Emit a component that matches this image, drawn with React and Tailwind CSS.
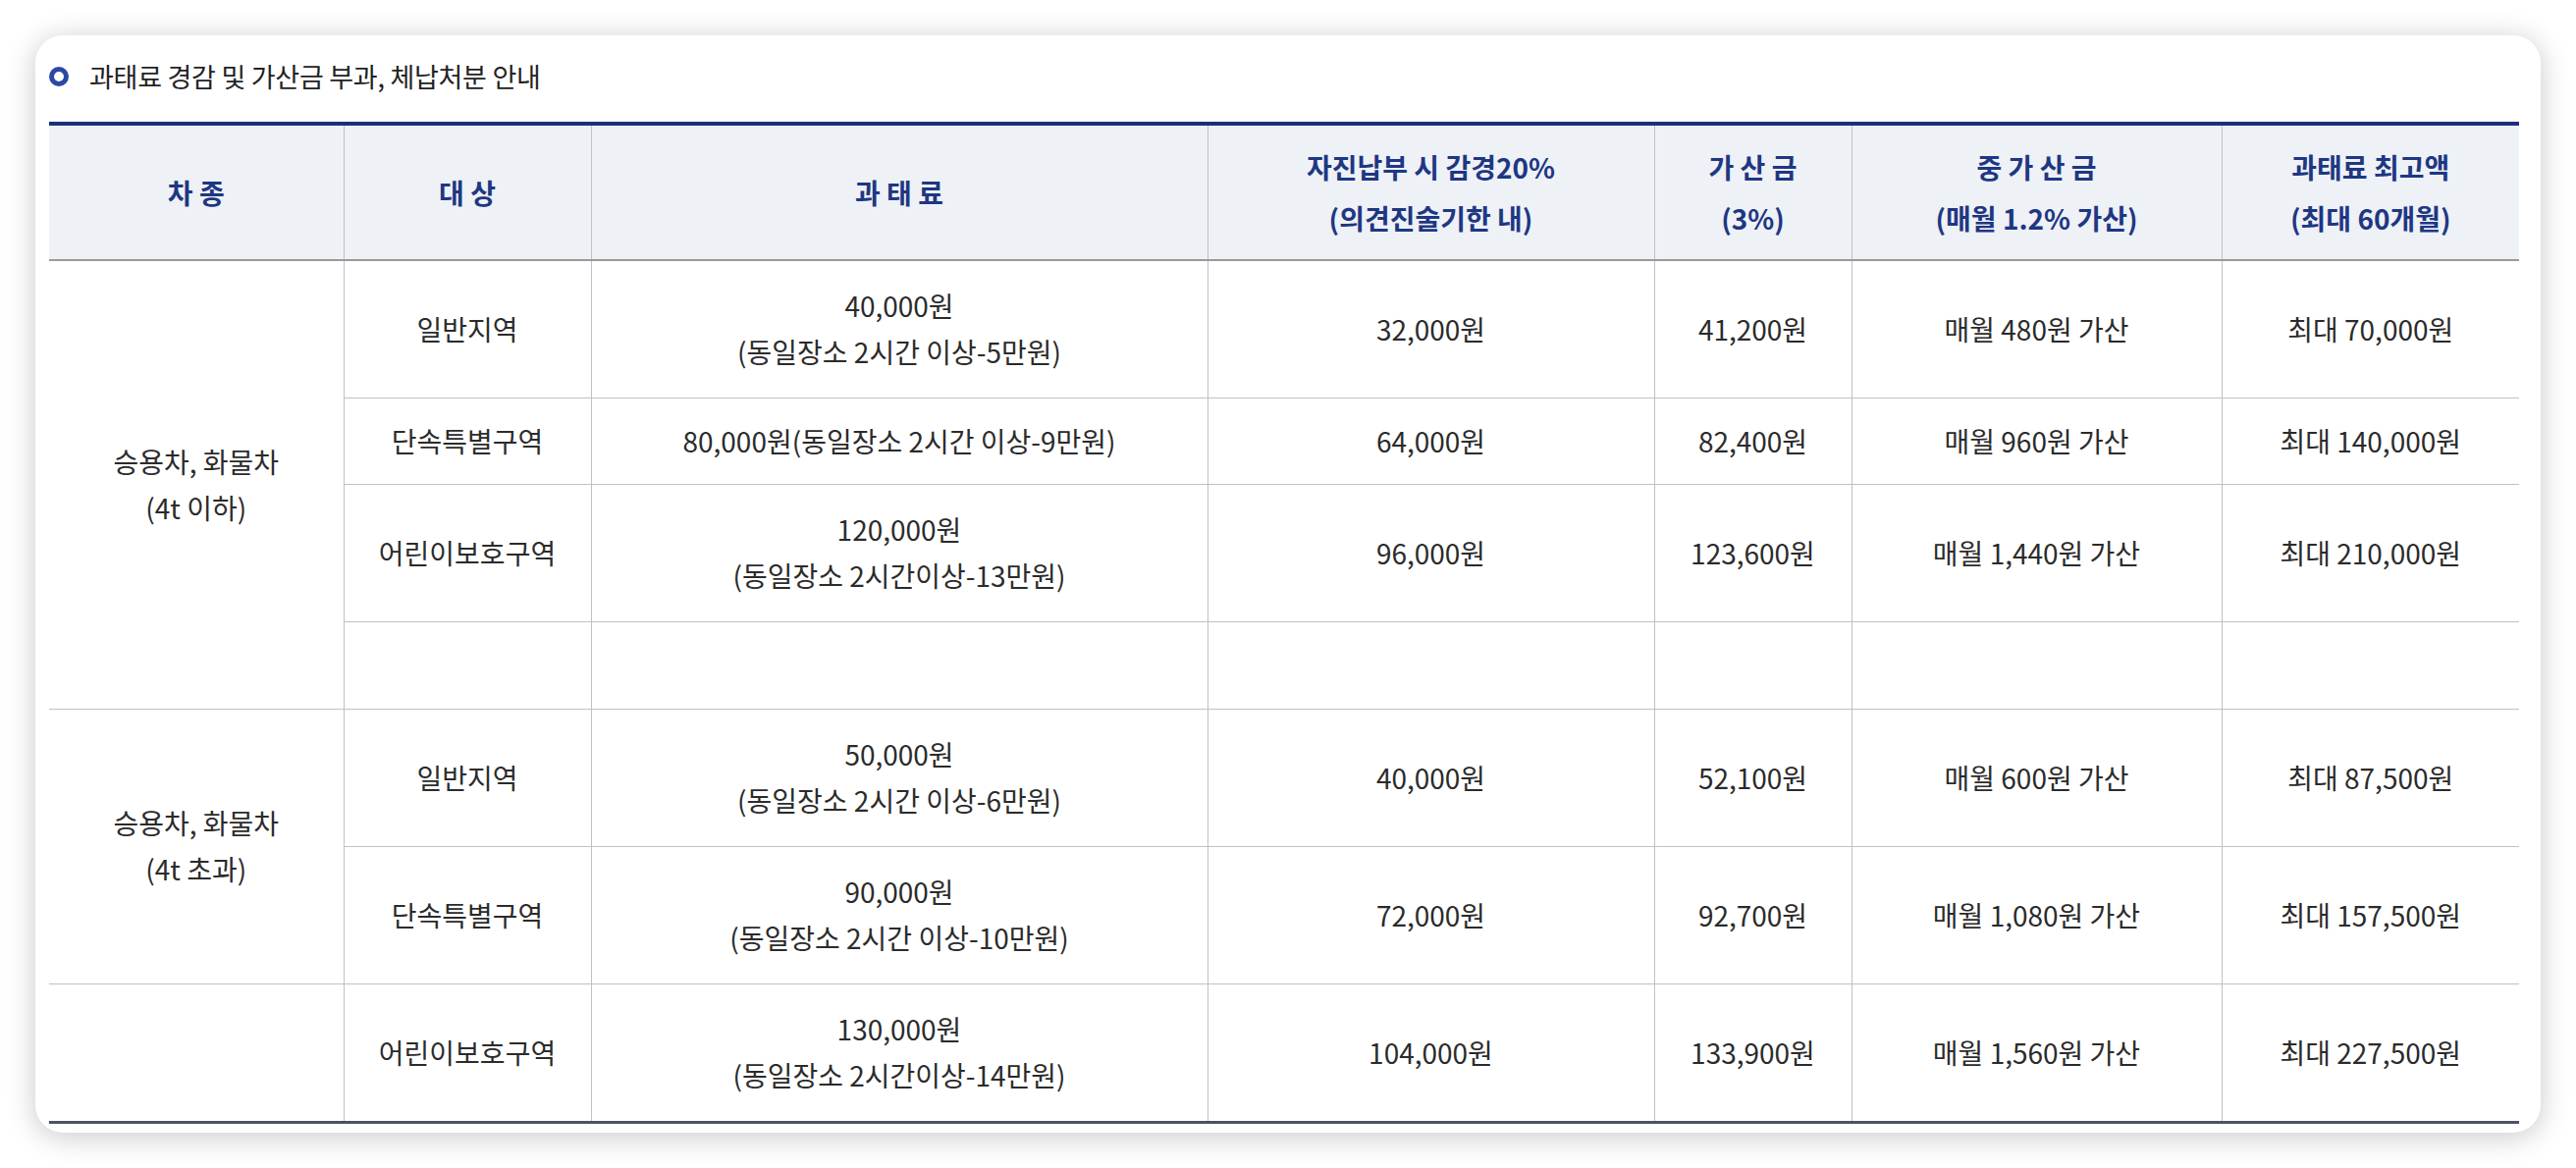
import React from "react";

const line = "border-[#bfc1c7]";

function Th({ children, last }) {
  return (
    <th
      className={`p-0 align-middle text-center font-bold text-[28px] leading-[52px] text-[#1e3783] border-b-2 border-b-[#9a9a9a] ${last ? "" : `border-r ${line}`}`}
    >
      {children}
    </th>
  );
}

function Td({ children, last, rowSpan }) {
  return (
    <td
      rowSpan={rowSpan}
      className={`p-0 align-middle text-center text-[28px] leading-[47px] text-[#2b2b2b] border-b ${line} ${last ? "" : `border-r ${line}`}`}
    >
      {children}
    </td>
  );
}

const rows = [
  { h: "h-[140px]", cells: ["일반지역", <>40,000원<br />(동일장소 2시간 이상-5만원)</>, "32,000원", "41,200원", "매월 480원 가산", "최대 70,000원"] },
  { h: "h-[88px]", cells: ["단속특별구역", "80,000원(동일장소 2시간 이상-9만원)", "64,000원", "82,400원", "매월 960원 가산", "최대 140,000원"] },
  { h: "h-[140px]", cells: ["어린이보호구역", <>120,000원<br />(동일장소 2시간이상-13만원)</>, "96,000원", "123,600원", "매월 1,440원 가산", "최대 210,000원"] },
  { h: "h-[89px]", cells: ["", "", "", "", "", ""] },
  { h: "h-[140px]", cells: ["일반지역", <>50,000원<br />(동일장소 2시간 이상-6만원)</>, "40,000원", "52,100원", "매월 600원 가산", "최대 87,500원"] },
  { h: "h-[140px]", cells: ["단속특별구역", <>90,000원<br />(동일장소 2시간 이상-10만원)</>, "72,000원", "92,700원", "매월 1,080원 가산", "최대 157,500원"] },
  { h: "h-[141px]", cells: ["어린이보호구역", <>130,000원<br />(동일장소 2시간이상-14만원)</>, "104,000원", "133,900원", "매월 1,560원 가산", "최대 227,500원"] },
];

export default function App() {
  return (
    <div className="w-[2624px] h-[1190px] bg-white pt-[36px] pl-[36px] font-['Noto_Sans_CJK_KR','Noto_Sans',sans-serif]">
      <div className="w-[2552px] h-[1118px] bg-white rounded-[28px] shadow-[0_4px_30px_rgba(0,0,0,0.22)] pt-[22px] pl-[14px] pr-[22px]">
        <div className="h-[40px] flex items-center">
          <span className="w-[20px] h-[20px] rounded-full border-[5px] border-[#2c47a5] box-border"></span>
          <span className="ml-[21px] text-[27px] leading-[40px] text-[#222] tracking-[-0.01em]">
            과태료 경감 및 가산금 부과, 체납처분 안내
          </span>
        </div>
        <table className="mt-[26px] w-[2516px] table-fixed border-collapse border-t-4 border-t-[#1b2f7e] border-b-[3px] border-b-[#4b5262]">
          <colgroup>
            <col className="w-[300px]" />
            <col className="w-[252px]" />
            <col className="w-[628px]" />
            <col className="w-[455px]" />
            <col className="w-[201px]" />
            <col className="w-[377px]" />
            <col className="w-[303px]" />
          </colgroup>
          <thead>
            <tr className="h-[139px] bg-[#eef1f6]">
              <Th>차 종</Th>
              <Th>대 상</Th>
              <Th>과 태 료</Th>
              <Th>자진납부 시 감경20%<br />(의견진술기한 내)</Th>
              <Th>가 산 금<br />(3%)</Th>
              <Th>중 가 산 금<br />(매월 1.2% 가산)</Th>
              <Th last>과태료 최고액<br />(최대 60개월)</Th>
            </tr>
          </thead>
          <tbody>
            {rows.map((r, i) => (
              <tr key={i} className={r.h}>
                {i === 0 && (
                  <Td rowSpan={4}>승용차, 화물차<br />(4t 이하)</Td>
                )}
                {i === 4 && (
                  <Td rowSpan={2}>승용차, 화물차<br />(4t 초과)</Td>
                )}
                {i === 6 && <Td></Td>}
                {r.cells.map((c, j) => (
                  <Td key={j} last={j === 5}>{c}</Td>
                ))}
              </tr>
            ))}
          </tbody>
        </table>
      </div>
    </div>
  );
}
